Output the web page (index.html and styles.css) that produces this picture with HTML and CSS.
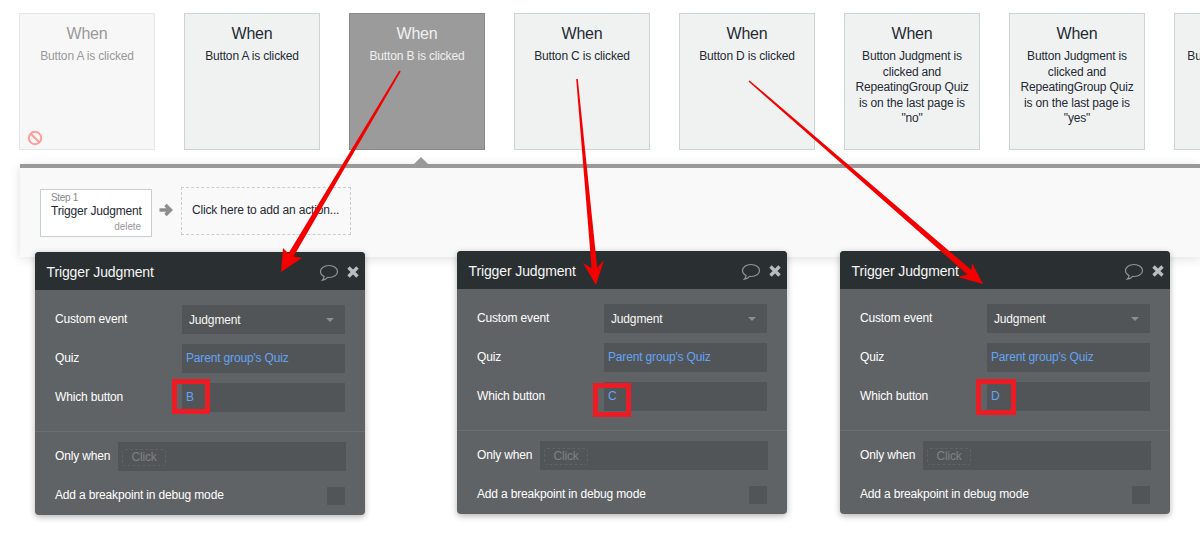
FILE: index.html
```html
<!DOCTYPE html>
<html lang="en">
<head>
  <meta charset="UTF-8" />
  <title>Workflow editor</title>
  <link rel="stylesheet" href="styles.css">
</head>
<body>
  <div class="page">
    <div class="cards">
      <div class="card disabled">
        <div class="card-title">When</div>
        <div class="card-text">Button A is clicked</div>
        <svg class="ban" width="16" height="16" viewBox="0 0 16 16"><circle cx="8" cy="8" r="6.2"/><line x1="3.7" y1="3.7" x2="12.3" y2="12.3"/></svg>
      </div>
      <div class="card">
        <div class="card-title">When</div>
        <div class="card-text">Button A is clicked</div>
      </div>
      <div class="card active">
        <div class="card-title">When</div>
        <div class="card-text">Button B is clicked</div>
        <span class="pointer"></span>
      </div>
      <div class="card">
        <div class="card-title">When</div>
        <div class="card-text">Button C is clicked</div>
      </div>
      <div class="card">
        <div class="card-title">When</div>
        <div class="card-text">Button D is clicked</div>
      </div>
      <div class="card">
        <div class="card-title">When</div>
        <div class="card-text">Button Judgment is clicked and RepeatingGroup Quiz is on the last page is "no"</div>
      </div>
      <div class="card">
        <div class="card-title">When</div>
        <div class="card-text">Button Judgment is clicked and RepeatingGroup Quiz is on the last page is "yes"</div>
      </div>
      <div class="card">
        <div class="card-title">When</div>
        <div class="card-text">Button Explanation is clicked</div>
      </div>
    </div>

    <div class="band">
      <div class="step">
        <div class="step-num">Step 1</div>
        <div class="step-name">Trigger Judgment</div>
        <div class="step-delete">delete</div>
      </div>
      <svg class="step-arrow" width="14" height="14" viewBox="0 0 14 14"><path d="M0.5 7H11.5M6.5 2L11.5 7L6.5 12"/></svg>
      <div class="add-action">Click here to add an action...</div>
    </div>

    <div class="panels">
      <div class="panel first">
        <div class="panel-head">
          <span class="panel-title">Trigger Judgment</span>
          <svg class="icon-comment" width="20" height="18" viewBox="0 0 20 18"><path d="M10 1.5C5.2 1.5 1.5 4 1.5 7.5C1.5 9.6 2.8 11.3 5 12.4C5 13.8 4.4 15.2 3.4 16.2C5.6 15.9 7.4 14.9 8.6 13.4C9 13.5 9.5 13.5 10 13.5C14.8 13.5 18.5 11 18.5 7.5C18.5 4 14.8 1.5 10 1.5Z"/></svg>
          <svg class="icon-close" width="14" height="14" viewBox="0 0 14 14"><path d="M2.5 2.5L11.5 11.5M11.5 2.5L2.5 11.5"/></svg>
        </div>
        <div class="panel-body">
          <div class="row"><label>Custom event</label><div class="field select">Judgment<span class="caret"></span></div></div>
          <div class="row"><label>Quiz</label><div class="field link">Parent group's Quiz</div></div>
          <div class="row"><label>Which button</label><div class="field link">B<span class="mark mark-b"></span></div></div>
          <div class="divider"></div>
          <div class="row"><label class="short">Only when</label><div class="field wide"><span class="click">Click</span></div></div>
          <div class="row debug"><label class="long">Add a breakpoint in debug mode</label><span class="check"></span></div>
        </div>
      </div>

      <div class="panel second">
        <div class="panel-head">
          <span class="panel-title">Trigger Judgment</span>
          <svg class="icon-comment" width="20" height="18" viewBox="0 0 20 18"><path d="M10 1.5C5.2 1.5 1.5 4 1.5 7.5C1.5 9.6 2.8 11.3 5 12.4C5 13.8 4.4 15.2 3.4 16.2C5.6 15.9 7.4 14.9 8.6 13.4C9 13.5 9.5 13.5 10 13.5C14.8 13.5 18.5 11 18.5 7.5C18.5 4 14.8 1.5 10 1.5Z"/></svg>
          <svg class="icon-close" width="14" height="14" viewBox="0 0 14 14"><path d="M2.5 2.5L11.5 11.5M11.5 2.5L2.5 11.5"/></svg>
        </div>
        <div class="panel-body">
          <div class="row"><label>Custom event</label><div class="field select">Judgment<span class="caret"></span></div></div>
          <div class="row"><label>Quiz</label><div class="field link">Parent group's Quiz</div></div>
          <div class="row"><label>Which button</label><div class="field link">C<span class="mark mark-c"></span></div></div>
          <div class="divider"></div>
          <div class="row"><label class="short">Only when</label><div class="field wide"><span class="click">Click</span></div></div>
          <div class="row debug"><label class="long">Add a breakpoint in debug mode</label><span class="check"></span></div>
        </div>
      </div>

      <div class="panel third">
        <div class="panel-head">
          <span class="panel-title">Trigger Judgment</span>
          <svg class="icon-comment" width="20" height="18" viewBox="0 0 20 18"><path d="M10 1.5C5.2 1.5 1.5 4 1.5 7.5C1.5 9.6 2.8 11.3 5 12.4C5 13.8 4.4 15.2 3.4 16.2C5.6 15.9 7.4 14.9 8.6 13.4C9 13.5 9.5 13.5 10 13.5C14.8 13.5 18.5 11 18.5 7.5C18.5 4 14.8 1.5 10 1.5Z"/></svg>
          <svg class="icon-close" width="14" height="14" viewBox="0 0 14 14"><path d="M2.5 2.5L11.5 11.5M11.5 2.5L2.5 11.5"/></svg>
        </div>
        <div class="panel-body">
          <div class="row"><label>Custom event</label><div class="field select">Judgment<span class="caret"></span></div></div>
          <div class="row"><label>Quiz</label><div class="field link">Parent group's Quiz</div></div>
          <div class="row"><label>Which button</label><div class="field link">D<span class="mark mark-d"></span></div></div>
          <div class="divider"></div>
          <div class="row"><label class="short">Only when</label><div class="field wide"><span class="click">Click</span></div></div>
          <div class="row debug"><label class="long">Add a breakpoint in debug mode</label><span class="check"></span></div>
        </div>
      </div>
    </div>

    <!-- red annotation arrows drawn over the screenshot -->
    <svg class="arrows" width="1200" height="538" viewBox="0 0 1200 538">
      <polygon points="399.3,70.6 400.7,71.4 293.6,256.5 302,258 281,272 283,248 288.4,253.5"/>
      <polygon points="576.2,79.1 577.8,78.9 597.2,267.7 604,260 596,285 583,263 591.6,268.3"/>
      <polygon points="748.5,81.6 749.5,80.4 971.4,269.9 972,263 983,284 958,277 967.4,274.5"/>
    </svg>
  </div>
</body>
</html>
```

FILE: styles.css
```css
* {
  box-sizing: border-box;
  font-family: 'Liberation Sans', Arial, sans-serif;
}

body {
  margin: 0;
  background-color: #fff;
}

.page {
  position: relative;
  width: 1200px;
  height: 538px;
  overflow: hidden;
}

/* event cards */
.cards {
  display: flex;
  gap: 29px;
  padding: 13px 0 0 19px;
}

.card {
  position: relative;
  flex: 0 0 136px;
  height: 137px;
  padding: 10px 8px 0;
  background-color: #f0f2f2;
  border: 1px solid #ccd4d8;
  color: #262a33;
  text-align: center;
}

.card-title {
  font-size: 16px;
  line-height: 20px;
  margin-bottom: 5px;
  letter-spacing: -0.2px;
}

.card-text {
  font-size: 12px;
  line-height: 15.6px;
  letter-spacing: -0.16px;
}

.card.disabled {
  background-color: #f7f7f7;
  border-color: #e3e7e9;
  color: #999;
}

.card.active {
  background-color: #9b9b9b;
  border-color: #888;
  color: #f0f0f0;
}

.ban {
  position: absolute;
  left: 7px;
  bottom: 3px;
  fill: none;
  stroke: #ff9c9c;
  stroke-width: 2;
}

.pointer {
  position: absolute;
  left: 64px;
  top: 143px;
  border-left: 7px solid transparent;
  border-right: 7px solid transparent;
  border-bottom: 7px solid #999;
}

/* workflow band */
.band {
  display: flex;
  align-items: flex-start;
  height: 93px;
  margin: 14px 0 0 20px;
  padding: 19px 0 0 20px;
  background-color: #f9f9f9;
  border-top: 4px solid #999;
  box-shadow: 0 2px 10px rgba(0,0,0,0.12);
}

.step {
  width: 112px;
  height: 48px;
  margin-top: 2px;
  padding: 2px 10px 0;
  background-color: #fff;
  border: 1px solid #c5cfd4;
  color: #262a33;
}

.step-num {
  font-size: 10px;
  line-height: 11px;
  letter-spacing: -0.3px;
  color: #888;
}

.step-name {
  font-size: 12px;
  line-height: 16px;
  white-space: nowrap;
  letter-spacing: -0.18px;
}

.step-delete {
  font-size: 10px;
  line-height: 12px;
  margin-top: 2px;
  letter-spacing: -0.1px;
  color: #999;
  text-align: right;
}

.step-arrow {
  margin: 16px 8px 0 7px;
  fill: none;
  stroke: #8d8d8d;
  stroke-width: 3.4;
}

.add-action {
  width: 170px;
  height: 48px;
  padding-left: 10px;
  border: 1px dashed #c5cfd4;
  font-size: 12px;
  line-height: 44px;
  letter-spacing: -0.16px;
  color: #262a33;
}

/* property panels */
.panels {
  display: flex;
  margin-top: -6px;
  padding-left: 35px;
}

.panel {
  flex: 0 0 330px;
  height: 263px;
  border-radius: 4px;
  background-color: #5f6366;
  box-shadow: 0 2px 6px rgba(0,0,0,0.3);
}

.panel.first {
  margin-top: 1px;
}

.panel.second {
  margin-left: 92px;
}

.panel.third {
  margin-left: 53px;
}

.panel-head {
  display: flex;
  align-items: center;
  height: 38px;
  padding: 2px 5px 0 11.5px;
  background-color: #2a3032;
  border-radius: 4px 4px 0 0;
}

.panel-title {
  flex: 1;
  font-size: 14px;
  letter-spacing: -0.12px;
  color: #f6f6f6;
}

.icon-comment {
  margin: 2px 7px 0 0;
  fill: none;
  stroke: #8d9799;
  stroke-width: 1.2;
}

.icon-close {
  fill: none;
  stroke: #b7bec1;
  stroke-width: 3.4;
}

.panel-body {
  padding: 15px 20px 0;
}

.row {
  display: flex;
  align-items: center;
  height: 29px;
  margin-bottom: 10px;
}

.row label {
  flex: 0 0 127px;
  padding-bottom: 2px;
  font-size: 12px;
  letter-spacing: -0.16px;
  color: #fff;
}

.row label.short {
  flex-basis: 63px;
}

.row label.long {
  flex: 1;
}

.field {
  position: relative;
  flex: 1;
  height: 29px;
  padding-left: 4px;
  background-color: #525557;
  font-size: 12px;
  line-height: 28px;
  letter-spacing: -0.16px;
}

.field.select {
  padding-left: 7px;
  line-height: 30px;
  color: #f6f6f6;
}

.field.link {
  color: #62a4f5;
}

.field.wide {
  padding: 7px 0 0 4px;
  margin-right: -1px;
}

.caret {
  position: absolute;
  right: 11px;
  top: 13px;
  border-left: 4px solid transparent;
  border-right: 4px solid transparent;
  border-top: 4px solid #8a8e91;
}

.click {
  display: block;
  width: 44px;
  height: 17px;
  border: 1px dashed #5f6366;
  border-radius: 3px;
  line-height: 15px;
  text-align: center;
  color: #7f8285;
}

.divider {
  height: 1px;
  margin: 19px -20px 10px;
  background-color: #6b6f72;
}

.row.debug {
  height: 18px;
  margin-top: 16px;
}

.check {
  width: 18px;
  height: 18px;
  background-color: #525557;
}

/* red highlight around the value */
.mark {
  position: absolute;
  border: 5px solid #ed1c24;
}

.mark-b {
  left: -10px;
  top: -4px;
  width: 38px;
  height: 35px;
}

.mark-c {
  left: -11px;
  top: 1px;
  width: 38px;
  height: 34px;
}

.mark-d {
  left: -11px;
  top: -3px;
  width: 40px;
  height: 36px;
}

.arrows {
  position: absolute;
  left: 0;
  top: 0;
  fill: #f40000;
  pointer-events: none;
}
```
